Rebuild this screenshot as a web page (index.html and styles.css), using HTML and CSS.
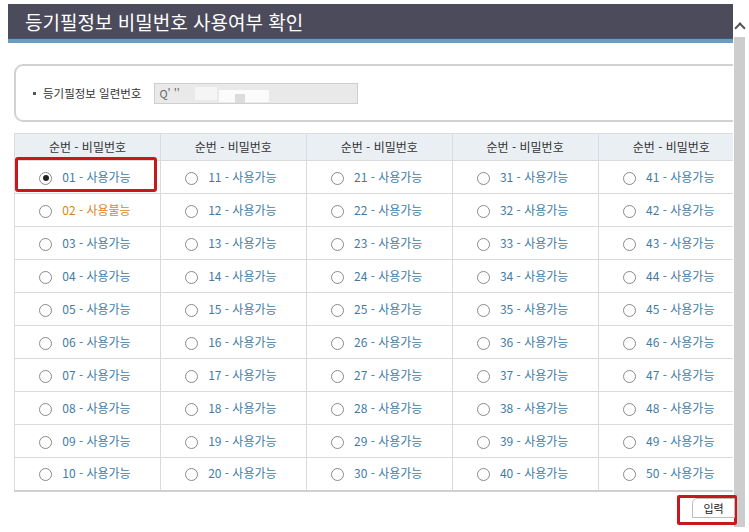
FILE: index.html
```html
<!DOCTYPE html>
<html lang="ko">
<head>
<meta charset="utf-8">
<link rel="stylesheet" href="styles.css">
</head>
<body>
<div class="page">
  <main class="main">
    <header class="title-bar"><h1>등기필정보 비밀번호 사용여부 확인</h1></header>
    <section class="info-box">
      <span class="bullet"></span>
      <span class="label">등기필정보 일련번호</span>
      <span class="serial">Q' ''<i class="blur b1"></i><i class="blur b2"></i><i class="blur b3"></i></span>
    </section>
    <div class="table-wrap">
      <table class="pw-table" id="pwTable">
        <thead>
          <tr><th>순번 - 비밀번호</th><th>순번 - 비밀번호</th><th>순번 - 비밀번호</th><th>순번 - 비밀번호</th><th>순번 - 비밀번호</th></tr>
        </thead>
        <tbody id="tbody"></tbody>
      </table>
      <div class="highlight"></div>
    </div>
    <div class="actions">
      <div class="btn-frame"><button class="btn">입력</button></div>
    </div>
  </main>
  <div class="scrollbar">
    <div class="arrow"></div>
    <div class="thumb"></div>
  </div>
</div>
<script src="app.js"></script>
</body>
</html>
```

FILE: app.js
```js
const tbody = document.getElementById('tbody');
for (let r = 1; r <= 10; r++) {
  const tr = document.createElement('tr');
  for (let c = 0; c < 5; c++) {
    const n = c * 10 + r;
    const num = String(n).padStart(2, '0');
    const bad = n === 2;
    const td = document.createElement('td');
    td.innerHTML = '<label class="opt"><input type="radio" name="pw"' + (n === 1 ? ' checked' : '') + '><span class="' + (bad ? 'txt bad' : 'txt') + '">' + num + ' - ' + (bad ? '사용불능' : '사용가능') + '</span></label>';
    tr.appendChild(td);
  }
  tbody.appendChild(tr);
}
```

FILE: styles.css
```css
* { box-sizing: border-box; }
html, body { margin: 0; padding: 0; background: #fff; }
body { font-family: "Noto Sans CJK KR", "Noto Sans", sans-serif; color: #333; }
.page { display: flex; width: 749px; height: 532px; overflow: hidden; }
.main { width: 733px; flex: none; padding-top: 4px; position: relative; }
.title-bar {
  margin-left: 8px;
  height: 39px;
  background: #4c4b5c;
  border-bottom: 4px solid #6b9cc4;
  box-shadow: inset 0 -1px 0 #3d5a78;
  display: flex; align-items: center;
  padding-left: 17px;
}
.title-bar h1 { margin: 0; font-size: 19px; font-weight: 400; color: #fff; line-height: 1; }
.info-box {
  margin: 21px 0 0 14px;
  width: 740px;
  height: 58px;
  border: 2px solid #d2d2d2;
  border-radius: 9px;
  display: flex; align-items: center;
  padding-left: 17px;
}
.bullet { width: 3px; height: 3px; background: #555; margin-right: 7px; }
.label { font-size: 11.5px; color: #333; }
.serial {
  position: relative;
  margin-left: 13px;
  width: 204px; height: 21px;
  background: #e9e9e9;
  border: 1px solid #cfcfcf;
  font-size: 11px; color: #666;
  padding-left: 4px; line-height: 19px;
  overflow: hidden;
}
.blur { position: absolute; top: 3px; height: 13px; background: #f3f3f3; }
.b1 { left: 40px; width: 22px; background: #f5f5f5; }
.b2 { left: 64px; width: 50px; top: 6px; height: 12px; background: #fbfbfb; }
.b3 { left: 80px; width: 10px; top: 10px; height: 9px; background: #dcdcdc; }
.table-wrap { position: relative; margin: 11px 0 0 14px; width: 730px; }
.pw-table {
  width: 730px;
  border-collapse: collapse;
  table-layout: fixed;
  border-top: 1px solid #d8dde2;
  border-bottom: 2px solid #d0d0d0;
}
.pw-table th {
  height: 27px;
  background: #eaeff3;
  font-size: 12px; font-weight: 400; color: #333;
  border-left: 1px solid #d6dce2;
  text-align: center;
  padding: 0 0 1px;
}
.pw-table td {
  height: 33px;
  border-left: 1px solid #d9d9d9;
  border-top: 1px solid #dadada;
  text-align: center;
  padding: 0 0 3px;
}
.pw-table tr > :first-child { border-left: 1px solid #dcdcdc; }
.opt { display: inline-flex; align-items: center; gap: 10px; margin-left: -5px; }
.opt input {
  appearance: none; -webkit-appearance: none;
  margin: 0; width: 13px; height: 13px;
  border: 1px solid #8a8a8a; border-radius: 50%;
  background: #fff; position: relative; top: 2px;
}
.opt input:checked::after {
  content: ""; position: absolute; left: 2.5px; top: 2.5px;
  width: 6px; height: 6px; border-radius: 50%; background: #222;
}
.txt { font-size: 12px; color: #3f7ca6; }
.txt.bad { color: #e07f1f; }
.highlight {
  position: absolute; left: 1px; top: 24px;
  width: 142px; height: 35px;
  border: 3px solid #c8171f; border-radius: 3px;
}
.actions { display: flex; justify-content: flex-end; margin-top: 3px; position: relative; z-index: 3; }
.btn-frame { border: 3px solid #c8171f; border-radius: 2px; padding: 0 0 4px 12px; margin-right: -4px; }
.btn {
  display: block;
  font-family: inherit; font-size: 11px; color: #222;
  width: 43px; height: 20px;
  margin-right: -1px;
  background: #fff; border: 1px solid #bdbdbd; border-radius: 5px 0 0 0;
  padding: 0;
}
.scrollbar { width: 16px; flex: none; background: #fff; position: relative; z-index: 2; }
.arrow { height: 37px; position: relative; }
.arrow::before {
  content: ""; position: absolute; left: 3px; top: 24px;
  width: 6px; height: 6px; border-left: 2px solid #555; border-top: 2px solid #555;
  transform: rotate(45deg);
}
.thumb { margin-left: 1px; width: 11px; height: 490px; background: #cdcdcd; }
```
